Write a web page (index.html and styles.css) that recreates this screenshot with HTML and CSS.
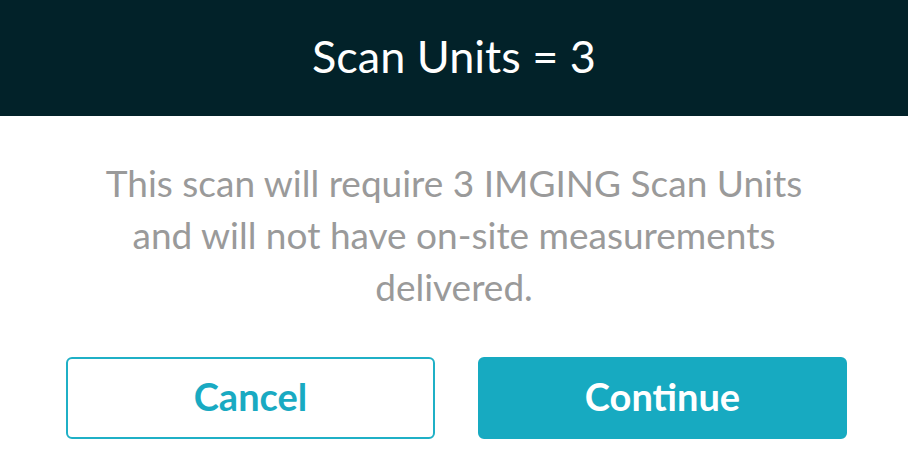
FILE: index.html
```html
<!DOCTYPE html>
<html lang="en">

<head>
    <meta charset="UTF-8">
    <meta name="viewport" content="width=device-width, initial-scale=1.0">
    <title>Scan Units</title>
    <link rel="stylesheet" href="styles.css">
</head>

<body>
    <div class="modal">
        <div class="modal-header">
            <h1>Scan Units = 3</h1>
        </div>
        <p class="message">This scan will require 3 IMGING Scan Units and will not have on-site measurements delivered.</p>
        <div class="actions">
            <button class="btn btn-outline">Cancel</button>
            <button class="btn btn-primary">Continue</button>
        </div>
    </div>
</body>

</html>
```

FILE: styles.css
```css
body {
    font-family: Lato, "Open Sans", sans-serif;
    margin: 0;
    padding: 0;
    background-color: #fff;
}

.modal {
    width: 908px;
    height: 474px;
    display: flex;
    flex-direction: column;
}

.modal-header {
    background-color: #022229;
    height: 116px;
    display: flex;
    justify-content: center;
    align-items: center;
}

.modal-header h1 {
    margin: 0;
    color: #fff;
    font-weight: 400;
    font-size: 45px;
    line-height: 54px;
    padding-bottom: 4px;
}

.message {
    margin: 41px auto 0;
    width: 740px;
    text-align: center;
    color: #9a9a9a;
    font-size: 37px;
    line-height: 52px;
}

.actions {
    display: grid;
    grid-template-columns: 1fr 1fr;
    gap: 43px;
    padding: 0 61px 0 66px;
    margin-top: 44px;
}

.btn {
    height: 82px;
    border-radius: 6px;
    font-family: Lato, sans-serif;
    font-weight: 700;
    font-size: 38px;
    padding: 0 0 4px;
    cursor: pointer;
}

.btn-outline {
    background-color: #fff;
    border: 2px solid #1fb0c6;
    color: #19aac2;
}

.btn-primary {
    background-color: #17aac1;
    border: 2px solid #17aac1;
    color: #fff;
}
```
